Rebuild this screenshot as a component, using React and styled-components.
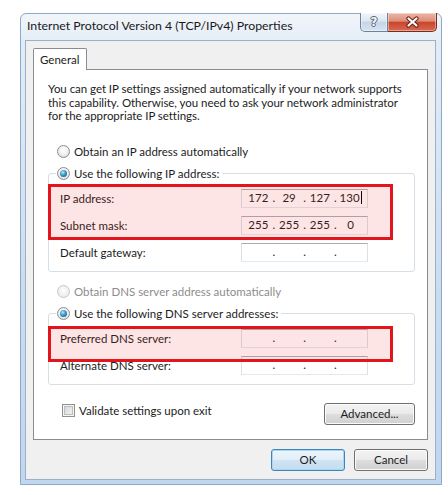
import styled, { createGlobalStyle } from "styled-components";

const GlobalStyle = createGlobalStyle`
  html, body {
    margin: 0;
    background: #fff;
  }
  body {
    font-family: "Lato", "Noto Sans", sans-serif;
    font-size: 11.5px;
    color: #1c1c1c;
  }
`;

const Window = styled.div`
  margin: 13px 0 0 20px;
  width: 422px;
  height: 472px;
  box-sizing: border-box;
  border: 1px solid #8ea8c7;
  border-radius: 6px 6px 0 0;
  background: linear-gradient(180deg, #f2f6fa 0%, #e3ecf6 6%, #cadcf0 60%, #c1d7ef 100%);
  display: flex;
  flex-direction: column;
  padding: 0 5px 4px 4px;
`;

const TitleBar = styled.div`
  height: 26px;
  display: flex;
  justify-content: space-between;
  align-items: flex-start;
`;

const Title = styled.div`
  margin: 5px 0 0 2px;
  font-size: 12.3px;
  line-height: 14px;
  color: #1a1a1a;
`;

const Caption = styled.div`
  display: flex;
  margin: -1px -1px 0 0;
`;

const CaptionButton = styled.div`
  width: ${(p) => (p.$close ? 49 : 28)}px;
  height: 19px;
  box-sizing: border-box;
  display: flex;
  align-items: center;
  justify-content: center;
  border: 1px solid ${(p) => (p.$close ? "#7e2b1f" : "#6f829c")};
  border-top: none;
  border-left-width: ${(p) => (p.$close ? 0 : 1)}px;
  border-radius: ${(p) => (p.$close ? "0 0 5px 0" : "0 0 0 5px")};
  background: ${(p) =>
    p.$close
      ? "linear-gradient(180deg, #ecb6a9 0%, #de8d79 45%, #c9462d 52%, #d66a50 100%)"
      : "linear-gradient(180deg, #f3f6fa 0%, #dde6f1 45%, #c6d5e7 52%, #d7e3f1 100%)"};
  box-shadow: inset 0 0 0 1px rgba(255, 255, 255, 0.4);
`;

const HelpGlyph = styled.span`
  font-family: "DejaVu Sans", sans-serif;
  font-weight: bold;
  font-size: 12px;
  line-height: 1;
  color: #f4f6f9;
  text-shadow: 1px 0 0 #55657a, -1px 0 0 #55657a, 0 1px 0 #55657a, 0 -1px 0 #55657a;
`;

const Client = styled.div`
  flex: 1;
  background: #f0f0f0;
  border: 1px solid #9cb0c7;
  padding: 7px 7px 0 7px;
  display: flex;
  flex-direction: column;
`;

const Tab = styled.div`
  align-self: flex-start;
  width: 54px;
  height: 22px;
  box-sizing: border-box;
  border: 1px solid #898c95;
  border-bottom: none;
  border-radius: 2px 2px 0 0;
  background: #fff;
  margin-bottom: -1px;
  position: relative;
  z-index: 1;
  padding: 4px 0 0 6px;
  line-height: 14px;
`;

const Panel = styled.div`
  background: #fff;
  border: 1px solid #898c95;
  padding: 12px 12px 14px 14px;
  display: flex;
  flex-direction: column;
`;

const Intro = styled.p`
  margin: 0;
  line-height: 13.5px;
  white-space: nowrap;
  letter-spacing: -0.04px;
`;

const Choice = styled.label`
  display: flex;
  align-items: center;
  gap: 4px;
  height: 16px;
  margin: ${(p) => p.$mt || 0}px 0 0 9px;
  color: ${(p) => (p.$disabled ? "#8d8d8d" : "inherit")};
`;

const Radio = styled.span`
  width: 13px;
  height: 13px;
  box-sizing: border-box;
  border-radius: 50%;
  border: 1px solid ${(p) => (p.$disabled ? "#c8c8c8" : "#8c8e90")};
  background: radial-gradient(circle at 50% 40%, #ffffff 0%, #f2f2f2 45%, ${(p) => (p.$disabled ? "#e6e6e6" : "#d2d2d2")} 100%);
  display: inline-flex;
  align-items: center;
  justify-content: center;
  flex-shrink: 0;
  &::after {
    content: "";
    display: ${(p) => (p.$checked ? "block" : "none")};
    width: 7px;
    height: 7px;
    border-radius: 50%;
    background: radial-gradient(circle at 40% 35%, #b3ecfb 0%, #3f93c9 45%, #1a4c7c 100%);
  }
`;

const Group = styled.fieldset`
  margin: 6px 0 0 0;
  padding: 7px 0 9px 0;
  border: 1px solid #d5dfe5;
  border-radius: 3px;
  min-width: 0;
`;

const Legend = styled.legend`
  margin-left: 7px;
  padding: 0 3px 0 1px;
  display: flex;
  align-items: center;
  gap: 4px;
  height: 16px;
`;

const Rows = styled.div`
  display: flex;
  flex-direction: column;
  gap: 8px;
`;

const Marked = styled.div`
  position: relative;
  display: flex;
  flex-direction: column;
  gap: 8px;
  &::after {
    content: "";
    position: absolute;
    left: -1px;
    right: 21px;
    top: ${(p) => p.$top}px;
    bottom: ${(p) => p.$bottom}px;
    border: 3px solid #e4141c;
    background: rgba(240, 40, 40, 0.12);
    pointer-events: none;
  }
`;

const Row = styled.div`
  display: grid;
  grid-template-columns: 181px 127px;
  align-items: center;
  padding-left: 11px;
  height: 19px;
`;

const IpBox = styled.div`
  height: 19px;
  box-sizing: border-box;
  border: 1px solid #dbdfe6;
  border-top-color: #abadb3;
  border-bottom-color: #e3e9ef;
  background: #fff;
  display: grid;
  grid-template-columns: 1fr 4px 1fr 4px 1fr 4px 1fr;
  align-items: center;
  padding: 0 3px;
  line-height: 16px;
`;

const Octet = styled.span`
  text-align: center;
`;

const Dot = styled.span`
  text-align: center;
`;

const Caret = styled.span`
  display: inline-block;
  width: 1px;
  height: 13px;
  background: #000;
  vertical-align: -2px;
  margin-left: 1px;
`;

const BottomRow = styled.div`
  display: flex;
  justify-content: space-between;
  align-items: flex-start;
  margin-top: 18px;
`;

const CheckLabel = styled.label`
  display: flex;
  align-items: center;
  gap: 4px;
  height: 15px;
  margin-left: 14px;
`;

const Check = styled.span`
  width: 13px;
  height: 13px;
  box-sizing: border-box;
  border: 1px solid #8e8f8f;
  background: linear-gradient(135deg, #cfcfcf 0%, #e6e6e6 55%, #f7f7f7 100%);
  box-shadow: inset 0 0 0 1px #f6f6f6, inset 0 0 0 2px #bdbdbd;
`;

const Button = styled.button`
  width: ${(p) => p.$w}px;
  height: 22px;
  padding: 0;
  font: inherit;
  color: #1c1c1c;
  border: 1px solid ${(p) => (p.$default ? "#3c86bf" : "#707070")};
  border-radius: 3px;
  background: ${(p) =>
    p.$default
      ? "linear-gradient(180deg, #eef6fc 0%, #e2eef8 48%, #cfe3f3 52%, #c5ddef 100%)"
      : "linear-gradient(180deg, #f3f3f3 0%, #ebebeb 48%, #dddddd 52%, #d0d0d0 100%)"};
  box-shadow: inset 0 0 0 1px ${(p) => (p.$default ? "#a8d8f3" : "#fbfbfb")};
`;

const Buttons = styled.div`
  display: flex;
  justify-content: flex-end;
  gap: 9px;
  margin-top: 9px;
`;

function CloseGlyph() {
  return (
    <svg width="15" height="12" viewBox="0 0 15 12">
      <path d="M3.5 2.5 L11.5 9.5 M11.5 2.5 L3.5 9.5" stroke="#6a2014" strokeWidth="4.2" strokeLinecap="round" />
      <path d="M3.5 2.5 L11.5 9.5 M11.5 2.5 L3.5 9.5" stroke="#ffffff" strokeWidth="2.2" strokeLinecap="round" />
    </svg>
  );
}

function IpField({ value, caret }) {
  const parts = value || ["", "", "", ""];
  return (
    <IpBox>
      <Octet>{parts[0]}</Octet>
      <Dot>.</Dot>
      <Octet>{parts[1]}</Octet>
      <Dot>.</Dot>
      <Octet>{parts[2]}</Octet>
      <Dot>.</Dot>
      <Octet>
        {parts[3]}
        {caret && <Caret />}
      </Octet>
    </IpBox>
  );
}

function Field({ label, value, caret }) {
  return (
    <Row>
      <span>{label}</span>
      <IpField value={value} caret={caret} />
    </Row>
  );
}

export default function App() {
  return (
    <>
      <GlobalStyle />
      <Window>
        <TitleBar>
          <Title>Internet Protocol Version 4 (TCP/IPv4) Properties</Title>
          <Caption>
            <CaptionButton>
              <HelpGlyph>?</HelpGlyph>
            </CaptionButton>
            <CaptionButton $close>
              <CloseGlyph />
            </CaptionButton>
          </Caption>
        </TitleBar>
        <Client>
          <Tab>General</Tab>
          <Panel>
            <Intro>
              You can get IP settings assigned automatically if your network supports
              <br />
              this capability. Otherwise, you need to ask your network administrator
              <br />
              for the appropriate IP settings.
            </Intro>
            <Choice $mt={21}>
              <Radio />
              Obtain an IP address automatically
            </Choice>
            <Group>
              <Legend>
                <Radio $checked />
                Use the following IP address:
              </Legend>
              <Rows>
                <Marked $top={-5} $bottom={-5}>
                  <Field label="IP address:" value={["172", "29", "127", "130"]} caret />
                  <Field label="Subnet mask:" value={["255", "255", "255", "0"]} />
                </Marked>
                <Field label="Default gateway:" />
              </Rows>
            </Group>
            <Choice $mt={12} $disabled>
              <Radio $disabled />
              Obtain DNS server address automatically
            </Choice>
            <Group>
              <Legend>
                <Radio $checked />
                Use the following DNS server addresses:
              </Legend>
              <Rows>
                <Marked $top={-3} $bottom={-14}>
                  <Field label="Preferred DNS server:" />
                </Marked>
                <Field label="Alternate DNS server:" />
              </Rows>
            </Group>
            <BottomRow>
              <CheckLabel>
                <Check />
                Validate settings upon exit
              </CheckLabel>
              <Button $w={91}>Advanced...</Button>
            </BottomRow>
          </Panel>
          <Buttons>
            <Button $w={74} $default>
              OK
            </Button>
            <Button $w={74}>Cancel</Button>
          </Buttons>
        </Client>
      </Window>
    </>
  );
}
